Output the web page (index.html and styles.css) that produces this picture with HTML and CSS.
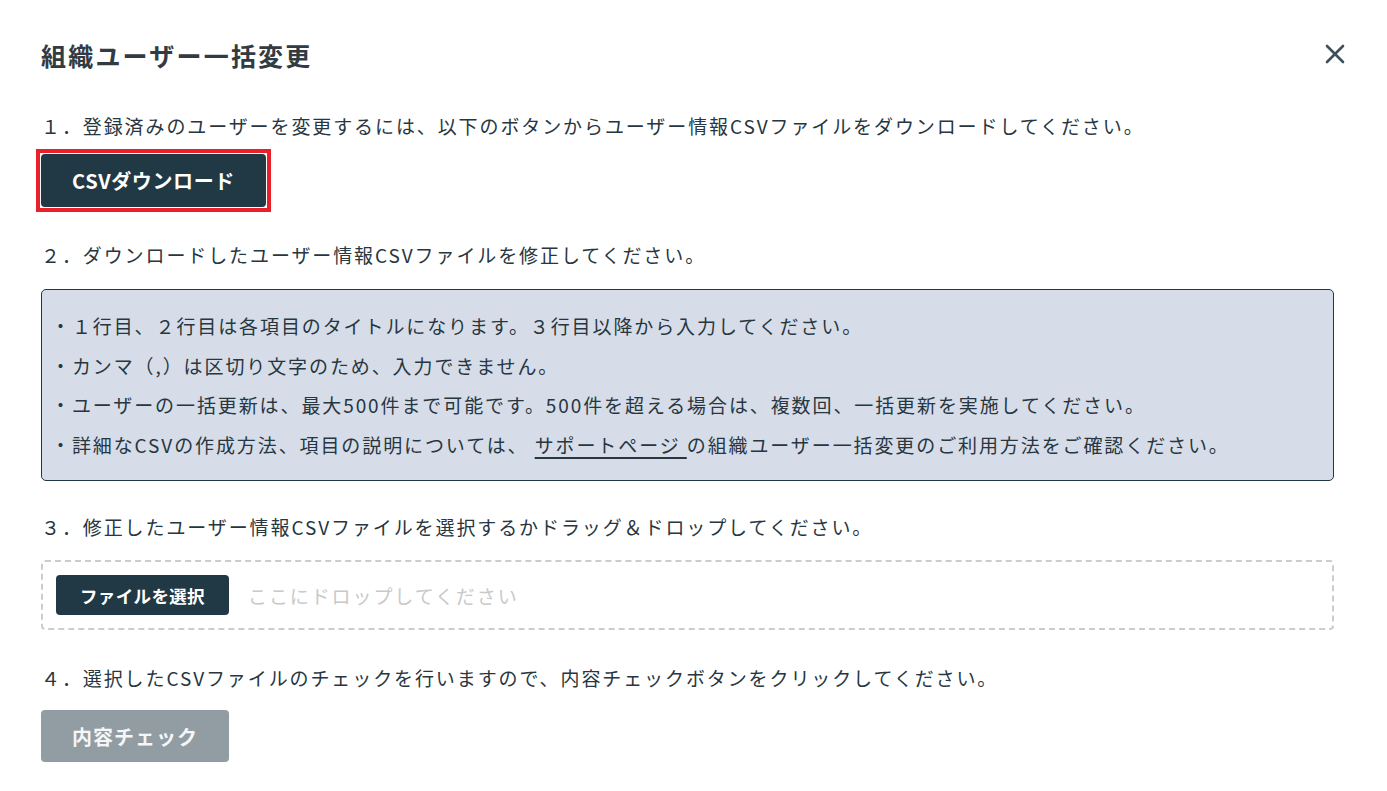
FILE: index.html
```html
<!DOCTYPE html>
<html lang="ja">
<head>
<meta charset="utf-8">
<title>組織ユーザー一括変更</title>
<link rel="stylesheet" href="styles.css">
</head>
<body>
<div class="modal">
  <header class="modal-header">
    <h1 class="modal-title">組織ユーザー一括変更</h1>
    <button class="close-btn" aria-label="閉じる">
      <svg width="20" height="20" viewBox="0 0 20 20"><path d="M2 2 L18 18 M18 2 L2 18" stroke="#3f505d" stroke-width="2.6" stroke-linecap="round" fill="none"/></svg>
    </button>
  </header>

  <p class="step step-1">１．登録済みのユーザーを変更するには、以下のボタンからユーザー情報CSVファイルをダウンロードしてください。</p>
  <div class="btn-row btn-row-1">
    <span class="highlight-frame">
      <button class="btn btn-primary btn-large btn-download">CSVダウンロード</button>
    </span>
  </div>

  <p class="step step-2">２．ダウンロードしたユーザー情報CSVファイルを修正してください。</p>
  <div class="notice">
    <p>・１行目、２行目は各項目のタイトルになります。３行目以降から入力してください。</p>
    <p>・カンマ（,）は区切り文字のため、入力できません。</p>
    <p>・ユーザーの一括更新は、最大500件まで可能です。500件を超える場合は、複数回、一括更新を実施してください。</p>
    <p>・詳細なCSVの作成方法、項目の説明については、 <a href="#" class="link">サポートページ </a>の組織ユーザー一括変更のご利用方法をご確認ください。</p>
  </div>

  <p class="step step-3">３．修正したユーザー情報CSVファイルを選択するかドラッグ＆ドロップしてください。</p>
  <div class="dropzone">
    <button class="btn btn-primary btn-small">ファイルを選択</button>
    <span class="drop-placeholder">ここにドロップしてください</span>
  </div>

  <p class="step step-4">４．選択したCSVファイルのチェックを行いますので、内容チェックボタンをクリックしてください。</p>
  <div class="btn-row">
    <button class="btn btn-disabled btn-large btn-check" disabled>内容チェック</button>
  </div>
</div>
</body>
</html>
```

FILE: styles.css
```css
* { box-sizing: border-box; }

html, body {
  margin: 0;
  padding: 0;
  background: #ffffff;
}

body {
  font-family: "Noto Sans CJK JP", "Noto Sans", sans-serif;
  color: #27363f;
}

.modal {
  width: 1387px;
  padding: 37px 53px 0 41px;
}

.modal-header {
  display: flex;
  justify-content: space-between;
  align-items: center;
  height: 36px;
}

.modal-title {
  margin: 0;
  font-size: 25px;
  line-height: 36px;
  font-weight: 700;
  letter-spacing: 0.088em;
  color: #333b42;
}

.close-btn {
  background: none;
  border: none;
  padding: 0;
  width: 20px;
  height: 20px;
  display: flex;
  margin-right: -11px;
  margin-top: -2px;
  cursor: pointer;
}

.step {
  margin: 0;
  font-size: 19px;
  line-height: 36px;
  letter-spacing: 0.1em;
  color: #27363f;
}

.step-1 { margin-top: 35px; }
.step-2 { margin-top: 25px; }
.step-3 { margin-top: 28px; }
.step-4 { margin-top: 30px; }

.btn-row {
  display: flex;
  margin-top: 14px;
}

.btn-row-1 { margin-top: 5px; }

.highlight-frame {
  display: inline-flex;
  border: 4px solid #e8202a;
  padding: 1px;
  margin-left: -5px;
}

.btn {
  font-family: "Noto Sans CJK JP", "Noto Sans", sans-serif;
  font-weight: 700;
  border: none;
  border-radius: 4px;
  color: #ffffff;
  padding: 0;
}

.btn-primary { background: #213845; }

.btn-large {
  height: 53px;
  font-size: 20px;
  letter-spacing: 0.03em;
}

.btn-download {
  width: 225px;
}

.btn-check {
  width: 188px;
  height: 52px;
  letter-spacing: 0.05em;
}

.btn-disabled {
  background: #919ca3;
  color: #f4f6f7;
}

.notice {
  margin-top: 16px;
  background: #d6dde9;
  border: 1px solid #213845;
  border-radius: 5px;
  padding: 16px 10px 16px 9px;
}

.notice p {
  margin: 0;
  font-size: 19px;
  line-height: 39.5px;
  letter-spacing: 0.1em;
  color: #27363f;
}

.link {
  color: #27363f;
  text-decoration: underline;
  text-decoration-thickness: 2px;
  text-underline-offset: 4px;
}

.dropzone {
  margin-top: 15px;
  height: 70px;
  border: 2px dashed #cccccc;
  border-radius: 4px;
  display: flex;
  align-items: center;
  padding: 0 13px;
  gap: 19px;
}

.btn-small {
  width: 173px;
  height: 40px;
  font-size: 17.5px;
  letter-spacing: 0.02em;
}

.drop-placeholder {
  font-size: 19px;
  letter-spacing: 0.1em;
  color: #c9c9c9;
}
```
